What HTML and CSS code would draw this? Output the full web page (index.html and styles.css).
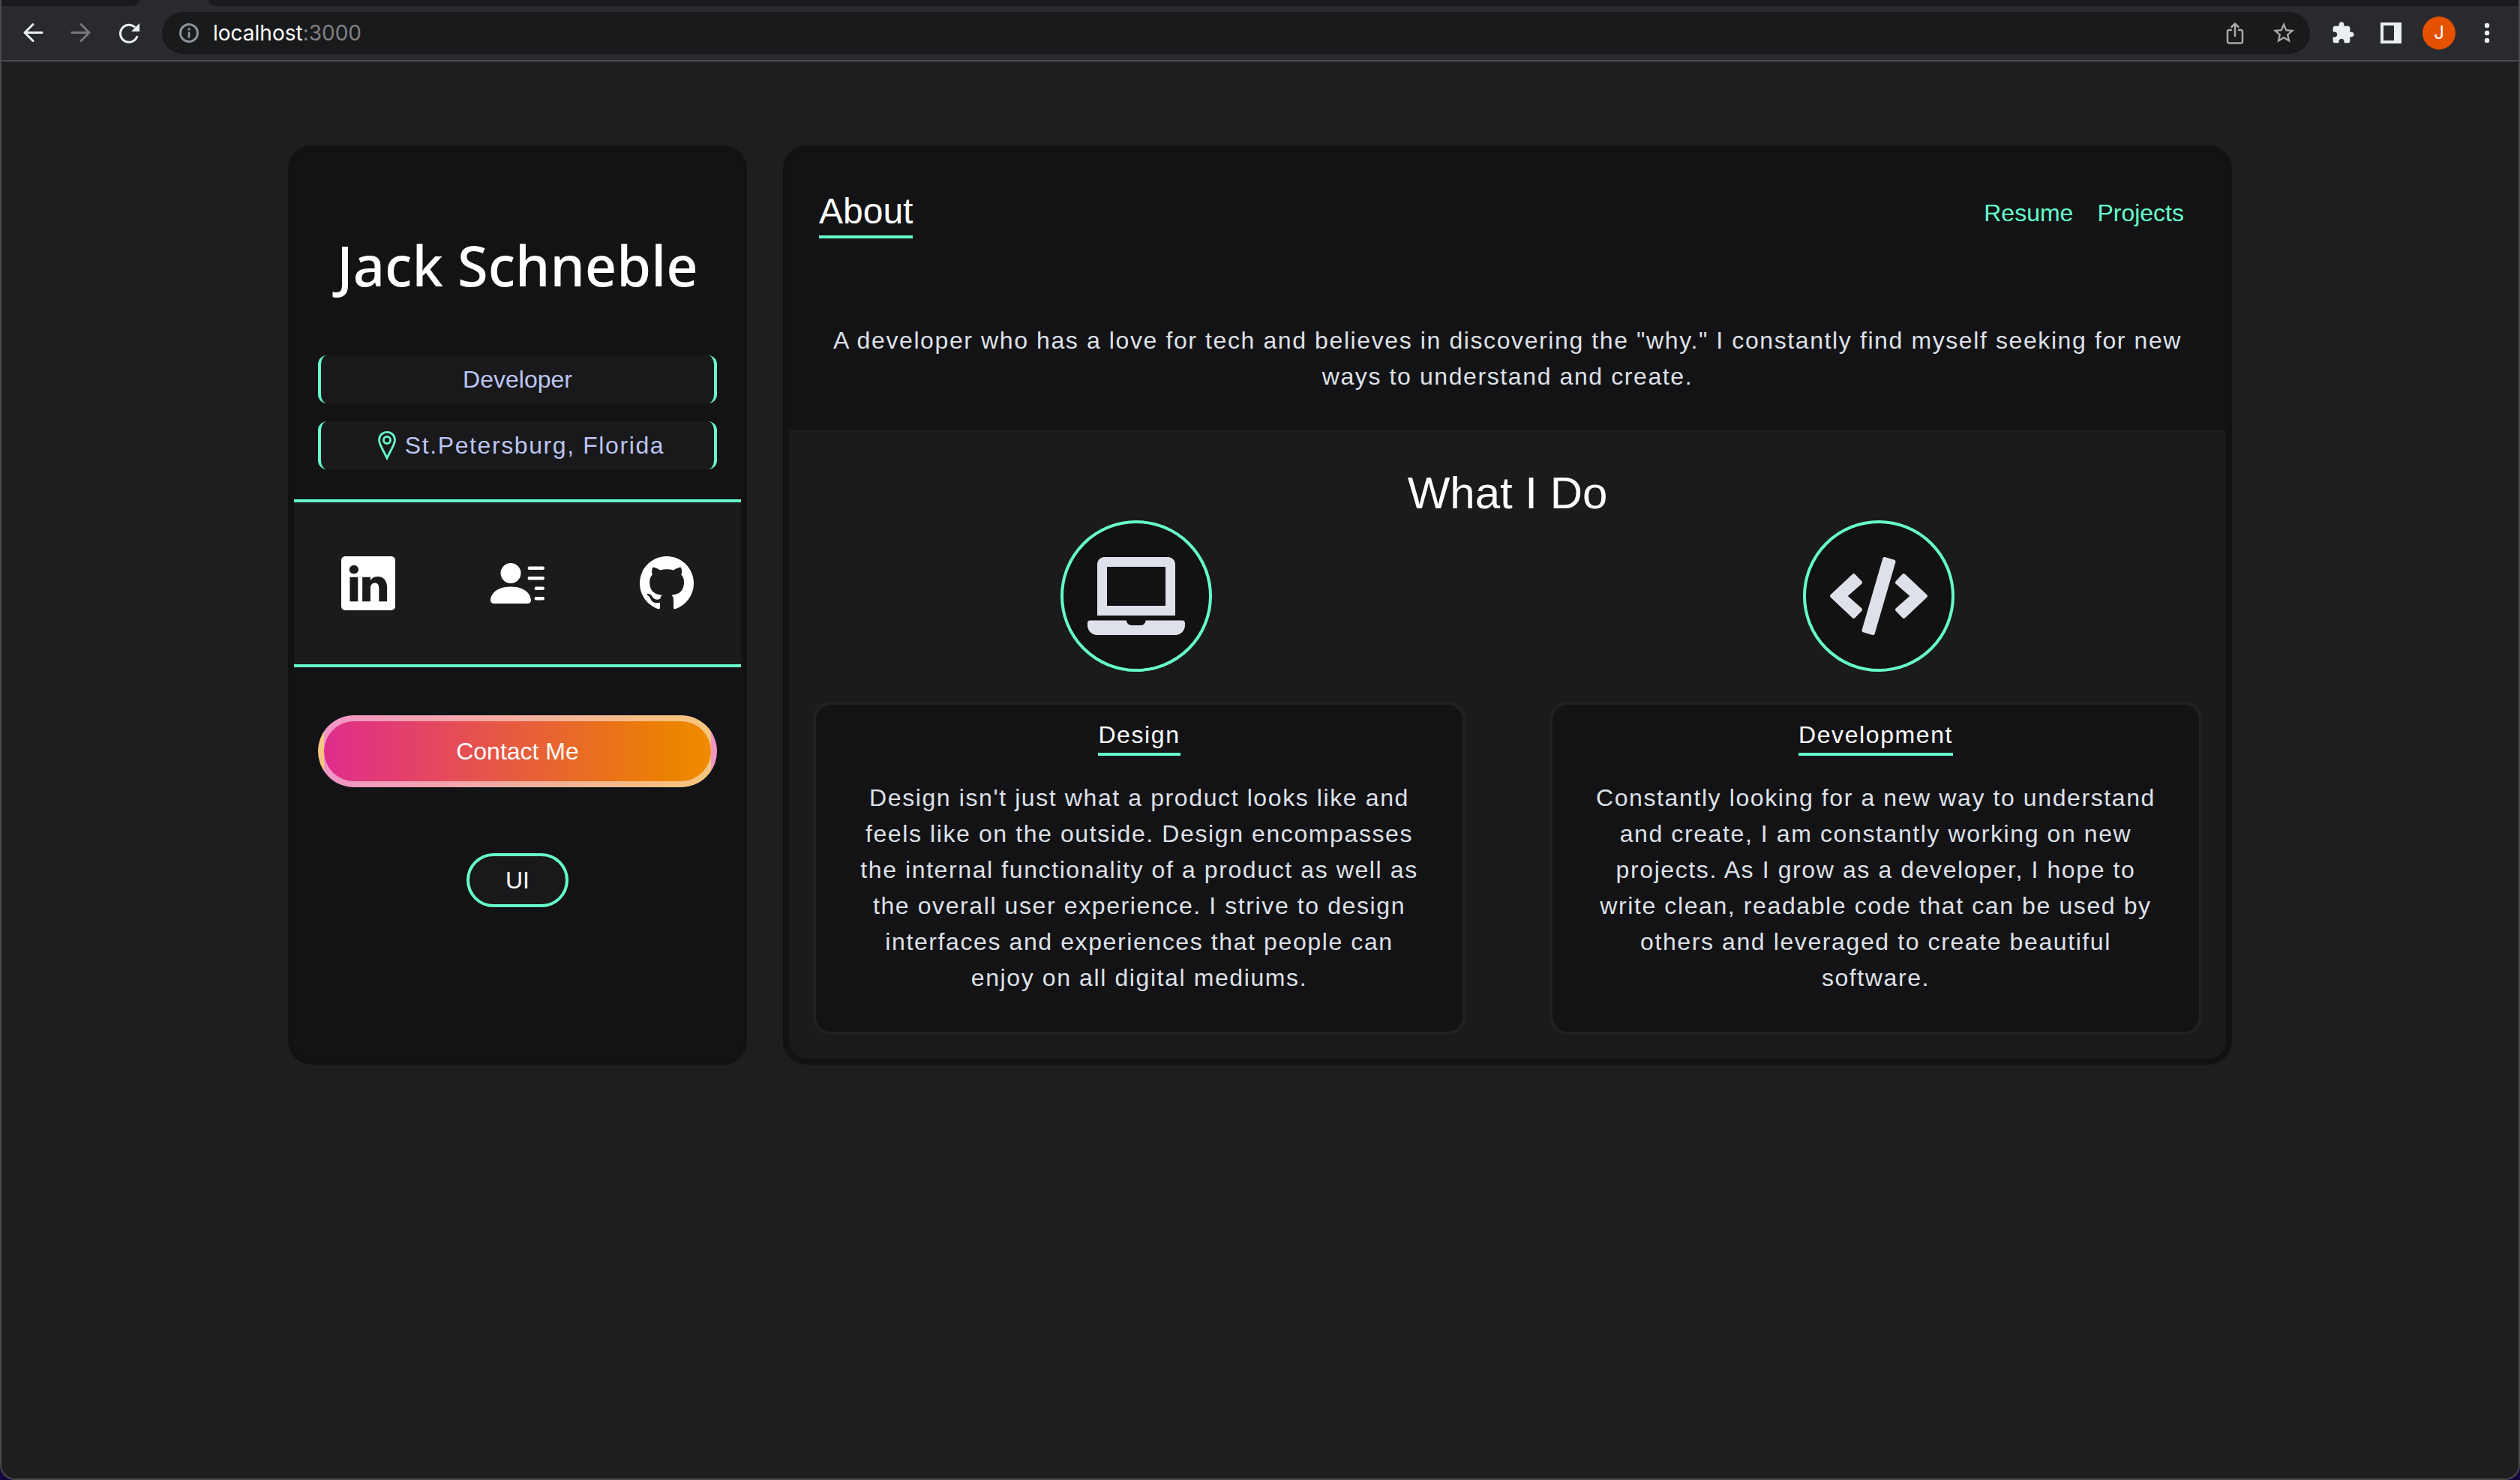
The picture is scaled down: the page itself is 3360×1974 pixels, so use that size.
FILE: index.html
```html
<!DOCTYPE html>
<html lang="en">
<head>
<meta charset="utf-8">
<meta name="viewport" content="width=device-width, initial-scale=1">
<title>Jack Schneble</title>
<link rel="stylesheet" href="styles.css">
</head>
<body>
<div class="window">
  <header class="browser">
    <div class="tabs"><span class="tab-rest tab-left"></span><span class="tab-rest tab-right"></span></div>
    <div class="toolbar">
      <button class="tool" type="button" aria-label="Back"><svg width="28" height="28" viewBox="0 0 28 28" fill="none" stroke="#eceff1" stroke-width="3" stroke-linecap="round" stroke-linejoin="round"><path d="M26 13.500H3M14 2.500L3 13.500L14 24.500"/></svg></button>
      <button class="tool" type="button" aria-label="Forward"><svg width="28" height="28" viewBox="0 0 28 28" fill="none" stroke="#77787b" stroke-width="3" stroke-linecap="round" stroke-linejoin="round"><path d="M2 13.500H25M14 2.500L25 13.500L14 24.500"/></svg></button>
      <button class="tool" type="button" aria-label="Reload"><svg width="28" height="28" viewBox="0 0 28 28"><path d="M25 18A11.500 11.500 0 1 1 22 6.500" fill="none" stroke="#eceff1" stroke-width="3"/><path d="M28 1V12H17z" fill="#eceff1"/></svg></button>
      <div class="address">
        <svg width="28" height="28" viewBox="0 0 28 28" aria-hidden="true"><circle cx="14" cy="14" r="11.500" fill="none" stroke="#8a9198" stroke-width="3"/><path d="M14 12.500V20.500M14 7.500V10.500" stroke="#8a9198" stroke-width="3"/></svg>
        <span class="url">localhost<span class="port">:3000</span></span>
        <button class="tool share" type="button" aria-label="Share"><svg width="28" height="32" viewBox="0 0 28 32" fill="none" stroke="#a9aaac" stroke-width="2.500" stroke-linecap="round" stroke-linejoin="round"><path d="M9 12H6.500Q4 12 4 14.500V27Q4 29.500 6.500 29.500H21.500Q24 29.500 24 27V14.500Q24 12 21.500 12H19M14 20V4M9.500 8L14 3.500L18.500 8"/></svg></button>
        <button class="tool" type="button" aria-label="Bookmark"><svg width="34" height="34" viewBox="0 0 24 24" fill="#a9aaac"><path d="M22 9.240l-7.190-.62L12 2 9.190 8.630 2 9.240l5.460 4.730L5.820 21 12 17.270 18.180 21l-1.630-7.030L22 9.240zM12 15.400l-3.760 2.270 1-4.280-3.320-2.880 4.380-.38L12 6.100l1.710 4.040 4.380.38-3.320 2.880 1 4.280L12 15.400z"/></svg></button>
      </div>
      <button class="tool" type="button" aria-label="Extensions"><svg width="32" height="32" viewBox="0 0 24 24" fill="#eceff1"><path d="M20.500 11H19V7c0-1.100-.9-2-2-2h-4V3.500C13 2.120 11.880 1 10.500 1S8 2.120 8 3.500V5H4c-1.100 0-1.990.9-1.990 2v3.800H3.500c1.490 0 2.700 1.210 2.700 2.700s-1.210 2.700-2.700 2.700H2V20c0 1.100.9 2 2 2h3.800v-1.500c0-1.490 1.210-2.700 2.700-2.700 1.490 0 2.700 1.210 2.700 2.700V22H17c1.100 0 2-.9 2-2v-4h1.500c1.380 0 2.500-1.120 2.500-2.500S21.880 11 20.500 11z"/></svg></button>
      <button class="tool side-panel" type="button" aria-label="Side panel"><svg width="28" height="28" viewBox="0 0 28 28" fill="#eceff1"><path fill-rule="evenodd" d="M0 0H28V28H0zM4 4V24H18V4z"/></svg></button>
      <button class="avatar" type="button">J</button>
      <button class="tool menu" type="button" aria-label="Menu"><svg width="28" height="28" viewBox="0 0 28 28" fill="#eceff1"><circle cx="14" cy="4" r="3.200"/><circle cx="14" cy="14" r="3.200"/><circle cx="14" cy="24" r="3.200"/></svg></button>
    </div>
  </header>

  <div class="page">
    <aside class="card profile">
      <h1 class="name">Jack Schneble</h1>
      <p class="tag">Developer</p>
      <p class="tag tag-place">
        <svg width="24" height="40" viewBox="0 0 24 40" fill="none" stroke="#66ffcc" stroke-width="2.800" aria-hidden="true"><path d="M12 2.400C6.500 2.400 1.500 6.500 1.500 13C1.500 19 8 28 12 37C16 28 22.500 19 22.500 13C22.500 6.500 17.500 2.400 12 2.400z"/><circle cx="12" cy="13" r="4.600"/></svg>
        St.Petersburg, Florida
      </p>
      <nav class="social" aria-label="Social">
        <a href="#linkedin" aria-label="LinkedIn"><svg width="72" height="72" viewBox="0 0 16 16" fill="currentColor"><path d="M0 1.146C0 .513.526 0 1.175 0h13.650C15.474 0 16 .513 16 1.146v13.708c0 .633-.526 1.146-1.175 1.146H1.175C.526 16 0 15.487 0 14.854V1.146zm4.943 12.248V6.169H2.542v7.225h2.401zm-1.200-8.212c.837 0 1.358-.554 1.358-1.248-.015-.709-.520-1.248-1.342-1.248-.822 0-1.359.540-1.359 1.248 0 .694.521 1.248 1.327 1.248h.016zm4.908 8.212V9.359c0-.216.016-.432.080-.586.173-.431.568-.878 1.232-.878.869 0 1.216.662 1.216 1.634v3.865h2.401V9.250c0-2.220-1.184-3.252-2.764-3.252-1.274 0-1.845.700-2.165 1.193v.025h-.016a5.540 5.540 0 0 1 .016-.025V6.169h-2.400c.030.678 0 7.225 0 7.225h2.400z"/></svg></a>
        <a href="#resume" aria-label="Résumé"><svg width="72" height="72" viewBox="0 0 16 16" fill="currentColor"><path d="M6 8a3 3 0 1 0 0-6 3 3 0 0 0 0 6zm-5 6s-1 0-1-1 1-4 6-4 6 3 6 4-1 1-1 1H1zM11 3.500a.5.5 0 0 1 .5-.5h4a.5.5 0 0 1 0 1h-4a.5.5 0 0 1-.5-.5zm.5 2.500a.5.5 0 0 0 0 1h4a.5.5 0 0 0 0-1h-4zm2 3a.5.5 0 0 0 0 1h2a.5.5 0 0 0 0-1h-2zm0 3a.5.5 0 0 0 0 1h2a.5.5 0 0 0 0-1h-2z"/></svg></a>
        <a href="#github" aria-label="GitHub"><svg width="72" height="72" viewBox="0 0 16 16" fill="currentColor"><path d="M8 0C3.580 0 0 3.580 0 8c0 3.540 2.290 6.530 5.470 7.590.4.070.55-.17.55-.38 0-.19-.01-.82-.01-1.490-2.010.37-2.530-.49-2.690-.94-.09-.23-.48-.94-.82-1.130-.28-.15-.68-.52-.01-.53.63-.01 1.080.58 1.230.82.72 1.210 1.870.87 2.330.66.070-.52.28-.87.51-1.070-1.780-.2-3.640-.89-3.640-3.950 0-.87.31-1.590.82-2.150-.08-.2-.36-1.020.08-2.120 0 0 .67-.21 2.200.82.64-.18 1.320-.27 2-.27.68 0 1.360.09 2 .27 1.530-1.040 2.200-.82 2.200-.82.44 1.100.16 1.920.08 2.120.51.56.82 1.270.82 2.150 0 3.070-1.870 3.750-3.650 3.950.29.25.54.73.54 1.480 0 1.070-.01 1.930-.01 2.200 0 .21.15.46.55.38A8.012 8.012 0 0 0 16 8c0-4.420-3.580-8-8-8z"/></svg></a>
      </nav>
      <button class="contact" type="button">Contact Me</button>
      <button class="skill" type="button">UI</button>
    </aside>

    <main class="card main">
      <header class="topnav">
        <h2 class="title">About</h2>
        <nav class="links"><a href="#resume">Resume</a><a href="#projects">Projects</a></nav>
      </header>
      <p class="intro">A developer who has a love for tech and believes in discovering the "why." I constantly find myself seeking for new ways to understand and create.</p>
      <section class="work">
        <h3 class="work-title">What I Do</h3>
        <div class="icons">
          <span class="round"><svg width="130" height="130" viewBox="0 0 640 640" fill="#dee1e9" aria-hidden="true"><path transform="translate(0 64)" d="M624 416H381.540c-.74 19.810-14.710 32-32.740 32H288c-18.690 0-33.020-17.470-32.770-32H16c-8.800 0-16 7.200-16 16v16c0 35.200 28.800 64 64 64h512c35.200 0 64-28.800 64-64v-16c0-8.800-7.200-16-16-16zM576 48c0-26.400-21.600-48-48-48H112C85.600 0 64 21.600 64 48v336h512V48zm-64 272H128V64h384v256z"/></svg></span>
          <span class="round"><svg width="130" height="130" viewBox="0 0 640 640" fill="#dee1e9" aria-hidden="true"><path transform="translate(0 64)" d="M278.900 511.500l-61-17.700c-6.400-1.800-10-8.500-8.200-14.900L346.200 8.700c1.800-6.400 8.500-10 14.900-8.200l61 17.700c6.400 1.800 10 8.500 8.200 14.900L293.800 503.300c-1.900 6.400-8.500 10.100-14.900 8.200zm-114-112.200l43.500-46.400c4.600-4.900 4.300-12.700-.8-17.200L117 256l90.600-79.700c5.100-4.500 5.500-12.300.8-17.200l-43.500-46.400c-4.500-4.800-12.100-5.100-17-.5L3.800 247.200c-5.100 4.700-5.100 12.800 0 17.500l144.100 135.100c4.900 4.600 12.500 4.400 17-.5zm327.200.6l144.100-135.100c5.100-4.700 5.100-12.800 0-17.500L492.100 112.100c-4.800-4.500-12.400-4.300-17 .5L431.600 159c-4.600 4.900-4.300 12.700.8 17.200L523 256l-90.600 79.700c-5.100 4.500-5.500 12.300-.8 17.200l43.500 46.400c4.500 4.900 12.100 5.100 17 .6z"/></svg></span>
        </div>
        <div class="panels">
          <article class="panel">
            <h4 class="panel-title">Design</h4>
            <p class="panel-text">Design isn't just what a product looks like and feels like on the outside. Design encompasses the internal functionality of a product as well as the overall user experience. I strive to design interfaces and experiences that people can enjoy on all digital mediums.</p>
          </article>
          <article class="panel">
            <h4 class="panel-title">Development</h4>
            <p class="panel-text">Constantly looking for a new way to understand and create, I am constantly working on new projects. As I grow as a developer, I hope to write clean, readable code that can be used by others and leveraged to create beautiful software.</p>
          </article>
        </div>
      </section>
    </main>
  </div>
</div>
</body>
</html>
```
FILE: styles.css
```css
:root {
  --mint: #66ffcc;
  --page: #1e1e20;
  --card: #131315;
  --edge: #121212;
  --section: #1b1b1d;
  --text: #dee1e9;
}
* { box-sizing: border-box; }
body {
  margin: 0;
  background: #16063f;
  color: #fff;
  font: 32px/48px "Liberation Sans", Arial, Helvetica, sans-serif;
}
h1, h2, h3, h4, p { margin: 0; font-weight: 400; }
a { text-decoration: none; }
svg { display: block; flex: none; }
button { font: inherit; color: inherit; cursor: pointer; }

.window {
  min-height: 100vh;
  background: var(--page);
  border: solid #4a4a4c;
  border-width: 0 2px 2px;
  border-radius: 0 0 20px 20px;
  overflow: hidden;
}

/* browser bar */
.browser { background: #292a2d; border-bottom: 2px solid #4d4d50; }
.tabs { display: flex; gap: 92px; height: 8px; }
.tab-rest { background: #191a1c; }
.tab-left { flex: 0 0 184px; border-bottom-right-radius: 12px 8px; }
.tab-right { flex: 1; border-bottom-left-radius: 12px 8px; }
.toolbar { display: flex; align-items: center; height: 72px; padding: 0 28px; }
.tool { display: flex; padding: 0; margin: 0; border: 0; background: none; }
.toolbar > .tool + .tool { margin-left: 36px; }
.toolbar > .tool + .side-panel { margin-left: 34px; }
.address {
  flex: 1;
  display: flex;
  align-items: center;
  height: 56px;
  margin: 0 28px 0 30px;
  padding: 0 18px 0 22px;
  border-radius: 28px;
  background: #191a1c;
}
.url { flex: 1; margin-left: 18px; font: 28px/40px Inter, Roboto, sans-serif; }
.port { color: #808184; }
.share { margin-right: 34px; }
.avatar {
  width: 44px;
  height: 44px;
  margin: 0 28px;
  padding: 0;
  border: 0;
  border-radius: 50%;
  background: #e65100;
  font: 24px/44px Inter, Roboto, sans-serif;
  text-align: center;
}

/* page grid */
.page {
  display: grid;
  grid-template-columns: repeat(12, 1fr);
  gap: 48px;
  padding: 112px 382px;
}
.card {
  border: 8px solid var(--edge);
  border-radius: 32px;
  background: var(--card);
  overflow: hidden;
}

/* profile */
.profile {
  grid-column: span 3;
  display: flex;
  flex-direction: column;
  align-items: center;
}
.name {
  margin: 100px 0 68px;
  font: 500 74px/104px "Noto Sans", "Open Sans", sans-serif;
}
.tag {
  display: flex;
  justify-content: center;
  align-items: center;
  gap: 12px;
  align-self: stretch;
  height: 64px;
  margin: 0 32px 24px;
  border: solid var(--mint);
  border-width: 0 4px;
  border-radius: 12px;
  background: #19191b;
  color: #bcc5f2;
}
.tag-place { margin-bottom: 40px; padding-left: 10px; letter-spacing: 0.05em; }
.social {
  align-self: stretch;
  display: flex;
  justify-content: space-around;
  padding: 72px 0;
  border: solid var(--mint);
  border-width: 4px 0;
  background: var(--section);
}
.social a { color: #fff; }
.contact {
  align-self: stretch;
  margin: 64px 32px 88px;
  padding: 16px 0;
  border: 8px solid rgba(255, 255, 255, 0.5);
  border-radius: 48px;
  background: linear-gradient(90deg, #e02c8c, #ec8200 90%, #f08c00);
}
.skill {
  padding: 8px 48px;
  border: 4px solid var(--mint);
  border-radius: 36px;
  background: #19191b;
}

/* main column */
.main { grid-column: span 9; }
.topnav {
  display: flex;
  justify-content: space-between;
  align-items: center;
  padding: 48px 56px 0 40px;
}
.title { font-size: 48px; line-height: 64px; border-bottom: 4px solid var(--mint); }
.links { display: flex; gap: 32px; }
.links a { color: var(--mint); }
.intro {
  padding: 112px 48px 48px;
  color: var(--text);
  letter-spacing: 0.05em;
  text-align: center;
}
.work { padding: 48px 32px 32px; background: var(--section); border-radius: 0 0 24px 24px; }
.work-title { font-size: 60px; line-height: 72px; text-align: center; }
.icons { display: flex; justify-content: space-around; gap: 64px; margin: 0 -32px 40px; }
.round {
  padding: 32px;
  border: 4px solid var(--mint);
  border-radius: 50%;
  background: #121212;
}
.panels { display: grid; grid-template-columns: 1fr 1fr; gap: 112px; }
.panel {
  display: flex;
  flex-direction: column;
  align-items: center;
  gap: 32px;
  padding: 16px 48px 48px;
  border: 4px solid #212123;
  border-radius: 24px;
  background: var(--card);
  letter-spacing: 0.05em;
}
.panel-title { font-size: 32px; border-bottom: 4px solid var(--mint); }
.panel-text { color: var(--text); text-align: center; }
```
